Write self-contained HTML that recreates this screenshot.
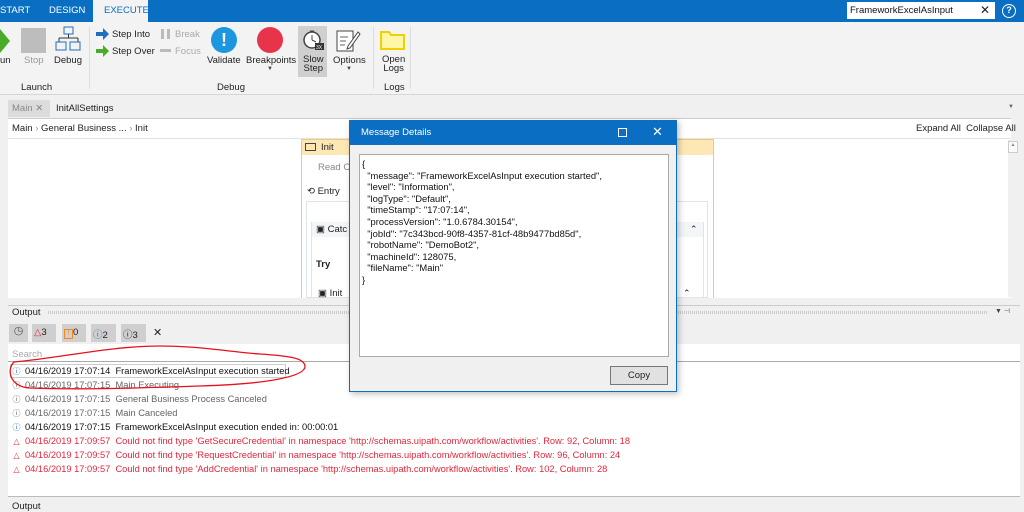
<!DOCTYPE html>
<html><head><meta charset="utf-8"><style>
*{margin:0;padding:0;box-sizing:border-box}
body{width:1024px;height:507px;overflow:hidden;background:#f0f0f0;font-family:"Liberation Sans",sans-serif;font-size:10px;color:#222;position:relative}
.a{position:absolute;white-space:nowrap}
.lbl{font-size:9.5px;color:#222;text-align:center}
.row{position:absolute;left:12px;font-size:9.3px;white-space:nowrap;height:14px;line-height:14px}
.ic{display:inline-block;width:9px;text-align:center;font-size:8px;margin-right:4px}
.g{color:#666}.r{color:#e0283c}.k{color:#111}
pre.a{font-family:"Liberation Sans",sans-serif;font-size:9.4px;line-height:11.6px;color:#111;white-space:pre}
</style></head><body>
<div class="a" style="left:0;top:0;width:1024px;height:22px;background:#0a6fc2"></div>
<div class="a" style="left:0;top:5px;color:#fff;font-size:9.5px">START</div>
<div class="a" style="left:49px;top:5px;color:#fff;font-size:9.5px">DESIGN</div>
<div class="a" style="left:93px;top:0;width:55px;height:23px;background:#f3f3f3"></div>
<div class="a" style="left:104px;top:5px;color:#0a6fc2;font-size:9.5px">EXECUTE</div>
<div class="a" style="left:847px;top:2px;width:148px;height:17px;background:#fff"></div>
<div class="a" style="left:850px;top:5px;font-size:9.5px;color:#111">FrameworkExcelAsInput</div>
<div class="a" style="left:980px;top:3px;font-size:12px;color:#222">✕</div>
<div class="a" style="left:1002px;top:4px;width:14px;height:14px;border:1.5px solid #fff;border-radius:50%;color:#fff;font-size:9px;text-align:center;line-height:11px;font-weight:bold">?</div>
<div class="a" style="left:0;top:22px;width:1024px;height:73px;background:#f3f3f3;border-bottom:1px solid #d6d6d6"></div>
<div class="a" style="left:0;top:29px;width:0;height:0;border-left:10px solid #4aaa2a;border-top:12px solid transparent;border-bottom:12px solid transparent"></div>
<div class="a lbl" style="left:0;top:55px">un</div>
<div class="a" style="left:21px;top:28px;width:25px;height:25px;background:#bdbdbd"></div>
<div class="a lbl" style="left:24px;top:55px;color:#999">Stop</div>
<svg class="a" style="left:55px;top:26px" width="28" height="28"><rect x="9" y="1" width="9" height="7" fill="none" stroke="#1e6fc0"/><path d="M13.5 8v4M4 12h19M4 12v4M23 12v4" stroke="#333" fill="none"/><rect x="1" y="16" width="10" height="8" fill="none" stroke="#1e6fc0"/><rect x="15" y="16" width="10" height="8" fill="none" stroke="#1e6fc0"/></svg>
<div class="a lbl" style="left:54px;top:55px">Debug</div>
<div class="a lbl" style="left:21px;top:82px">Launch</div>
<div class="a" style="left:89px;top:27px;width:1px;height:62px;background:#ddd"></div>
<svg class="a" style="left:96px;top:28px" width="14" height="12"><path d="M0 4h7V0l6 6-6 6V8H0z" fill="#1e6fc0"/></svg>
<div class="a" style="left:112px;top:29px;font-size:9.5px">Step Into</div>
<svg class="a" style="left:96px;top:45px" width="14" height="12"><path d="M0 4h7V0l6 6-6 6V8H0z" fill="#4aaa2a"/></svg>
<div class="a" style="left:112px;top:46px;font-size:9.5px">Step Over</div>
<div class="a" style="left:161px;top:29px;width:3px;height:10px;background:#bbb"></div><div class="a" style="left:167px;top:29px;width:3px;height:10px;background:#bbb"></div>
<div class="a" style="left:175px;top:29px;font-size:9.5px;color:#aaa">Break</div>
<div class="a" style="left:160px;top:49px;width:11px;height:3px;background:#bbb"></div>
<div class="a" style="left:175px;top:46px;font-size:9.5px;color:#aaa">Focus</div>
<div class="a" style="left:211px;top:27px;width:26px;height:26px;border-radius:50%;background:#1c96e0;color:#fff;font-weight:bold;font-size:18px;text-align:center;line-height:26px">!</div>
<div class="a lbl" style="left:207px;top:55px">Validate</div>
<div class="a" style="left:257px;top:27px;width:26px;height:26px;border-radius:50%;background:#e8344a"></div>
<div class="a lbl" style="left:246px;top:55px">Breakpoints</div>
<div class="a" style="left:267px;top:66px;font-size:6px;color:#444">▼</div>
<div class="a" style="left:298px;top:26px;width:29px;height:51px;background:#cfcfcf"></div>
<svg class="a" style="left:301px;top:28px" width="24" height="24"><circle cx="11" cy="12" r="8" fill="#fff" stroke="#444" stroke-width="1.5"/><path d="M9 3h4M11 12V7M11 12l4 2" stroke="#444" fill="none"/><rect x="14" y="15" width="9" height="7" fill="#333"/><text x="15" y="21" font-size="5" fill="#fff" font-family="Liberation Sans">3X</text></svg>
<div class="a lbl" style="left:303px;top:55px;line-height:9px">Slow<br>Step</div>
<svg class="a" style="left:335px;top:28px" width="28" height="24"><rect x="2" y="3" width="16" height="20" fill="#fff" stroke="#444"/><path d="M5 9h8M5 13h6M5 17h5" stroke="#666"/><path d="M13 18l10-14 2 2-10 14-3 1z" fill="#fff" stroke="#444"/></svg>
<div class="a lbl" style="left:333px;top:55px">Options</div>
<div class="a" style="left:346px;top:66px;font-size:6px;color:#444">▼</div>
<div class="a lbl" style="left:217px;top:82px">Debug</div>
<div class="a" style="left:373px;top:27px;width:1px;height:62px;background:#ddd"></div>
<svg class="a" style="left:380px;top:30px" width="26" height="20"><path d="M1 2h8l2 3h13v14H1z" fill="#fff6a8" stroke="#f0d000" stroke-width="2"/></svg>
<div class="a lbl" style="left:382px;top:55px;line-height:9px">Open<br>Logs</div>
<div class="a lbl" style="left:384px;top:82px">Logs</div>
<div class="a" style="left:410px;top:27px;width:1px;height:62px;background:#ddd"></div>
<div class="a" style="left:8px;top:100px;width:42px;height:17px;background:#dcdcdc"></div>
<div class="a" style="left:12px;top:103px;font-size:9.5px;color:#888">Main ✕</div>
<div class="a" style="left:56px;top:103px;font-size:9.5px">InitAllSettings</div>
<div class="a" style="left:1008px;top:104px;font-size:6px;color:#666">▼</div>
<div class="a" style="left:8px;top:118px;width:1003px;height:180px;background:#fff;border-top:1px solid #ccc"></div>
<div class="a" style="left:8px;top:138px;width:1003px;height:1px;background:#dde4ee"></div>
<div class="a" style="left:12px;top:123px;font-size:9.5px">Main <span style="color:#999">›</span> General Business ... <span style="color:#999">›</span> Init</div>
<div class="a" style="left:916px;top:123px;font-size:9.5px">Expand All &nbsp;Collapse All</div>
<div class="a" style="left:1008px;top:140px;width:10px;height:157px;background:#f0f0f0"></div>
<div class="a" style="left:1008px;top:141px;width:10px;height:12px;border:1px solid #ccc;background:#fafafa;font-size:5px;text-align:center;color:#888">▲</div>
<div class="a" style="left:301px;top:139px;width:413px;height:159px;border:1px solid #f3c878;border-bottom:none;background:#fff"></div>
<div class="a" style="left:302px;top:140px;width:411px;height:15px;background:#fde8b4"></div>
<div class="a" style="left:305px;top:143px;width:11px;height:8px;border:1px solid #444"></div>
<div class="a" style="left:321px;top:142px;font-size:9.5px">Init</div>
<div class="a" style="left:318px;top:162px;font-size:9.5px;color:#888">Read Co</div>
<div class="a" style="left:307px;top:186px;font-size:9.5px">⟲ Entry</div>
<div class="a" style="left:306px;top:201px;width:402px;height:97px;border:1px solid #dde4ee"></div>
<div class="a" style="left:311px;top:222px;width:393px;height:76px;border:1px solid #dde4ee"></div>
<div class="a" style="left:312px;top:222px;width:391px;height:15px;background:#f3f5f8"></div>
<div class="a" style="left:316px;top:224px;font-size:9.5px">▣ Catc</div>
<div class="a" style="left:690px;top:224px;font-size:9px">⌃</div>
<div class="a" style="left:316px;top:259px;font-size:9.5px;font-weight:bold">Try</div>
<div class="a" style="left:318px;top:288px;font-size:9.5px">▣ Init</div>
<div class="a" style="left:683px;top:288px;font-size:9px">⌃</div>
<div class="a" style="left:8px;top:305px;width:1012px;height:1px;background:#ccc"></div>
<div class="a" style="left:12px;top:307px;font-size:9.5px">Output</div>
<div class="a" style="left:48px;top:311px;width:940px;height:3px;background:repeating-linear-gradient(90deg,#ccc 0 1px,transparent 1px 2px)"></div>
<div class="a" style="left:995px;top:307px;font-size:7px;color:#444">▼ ⊣</div>
<div class="a" style="left:9px;top:324px;width:19px;height:18px;background:#cfcfcf;font-size:11px;text-align:center;color:#555">◷</div>
<div class="a" style="left:32px;top:324px;width:24px;height:18px;background:#cfcfcf;font-size:9.5px;padding:3px 2px"><span style="color:#e0283c">△</span>3</div>
<div class="a" style="left:62px;top:324px;width:24px;height:18px;background:#cfcfcf;font-size:9.5px;padding:3px 2px"><span style="display:inline-block;width:9px;height:10px;border:1px solid #f08a20;color:#f08a20;font-size:7px;text-align:center;line-height:8px">!</span>0</div>
<div class="a" style="left:91px;top:324px;width:25px;height:18px;background:#cfcfcf;font-size:9.5px;padding:3px 2px"><span style="color:#1e6fc0">ⓘ</span>2</div>
<div class="a" style="left:121px;top:324px;width:25px;height:18px;background:#cfcfcf;font-size:9.5px;padding:3px 2px">ⓘ3</div>
<div class="a" style="left:153px;top:326px;font-size:11px">✕</div>
<div class="a" style="left:8px;top:344px;width:1012px;height:18px;background:#fff;border-bottom:1px solid #aaa"></div>
<div class="a" style="left:12px;top:349px;font-size:9.5px;color:#aaa">Search</div>
<div class="a" style="left:8px;top:362px;width:1012px;height:135px;background:#fff;border-bottom:1px solid #bbb"></div>
<div class="a" style="left:10px;top:364px;width:276px;height:14px;border:1px solid #ccc"></div>
<div class="row k" style="top:364px"><span class="ic" style="color:#1e6fc0">ⓘ</span>04/16/2019 17:07:14&nbsp; FrameworkExcelAsInput execution started</div>
<div class="row g" style="top:378px"><span class="ic">ⓘ</span>04/16/2019 17:07:15&nbsp; Main Executing</div>
<div class="row g" style="top:392px"><span class="ic">ⓘ</span>04/16/2019 17:07:15&nbsp; General Business Process Canceled</div>
<div class="row g" style="top:406px"><span class="ic">ⓘ</span>04/16/2019 17:07:15&nbsp; Main Canceled</div>
<div class="row k" style="top:420px"><span class="ic" style="color:#1e6fc0">ⓘ</span>04/16/2019 17:07:15&nbsp; FrameworkExcelAsInput execution ended in: 00:00:01</div>
<div class="row r" style="top:434px"><span class="ic">△</span>04/16/2019 17:09:57&nbsp; Could not find type 'GetSecureCredential' in namespace 'http://schemas.uipath.com/workflow/activities'. Row: 92, Column: 18</div>
<div class="row r" style="top:448px"><span class="ic">△</span>04/16/2019 17:09:57&nbsp; Could not find type 'RequestCredential' in namespace 'http://schemas.uipath.com/workflow/activities'. Row: 96, Column: 24</div>
<div class="row r" style="top:462px"><span class="ic">△</span>04/16/2019 17:09:57&nbsp; Could not find type 'AddCredential' in namespace 'http://schemas.uipath.com/workflow/activities'. Row: 102, Column: 28</div>
<div class="a" style="left:12px;top:501px;font-size:9.5px">Output</div>
<svg class="a" style="left:0;top:340px" width="320" height="60"><path d="M14 22 C60 18 110 6 160 6 C200 6 230 12 260 14 C290 16 304 18 305 26 C306 36 270 44 200 46 C140 48 80 50 30 48 C10 47 6 30 14 22 Z" fill="none" stroke="#e8101a" stroke-width="1.3"/></svg>
<div class="a" style="left:349px;top:120px;width:328px;height:272px;background:#f0f0f0;border:1px solid #0a6fc2;box-shadow:2px 2px 6px rgba(0,0,0,.25)"></div>
<div class="a" style="left:349px;top:120px;width:328px;height:25px;background:#0a6fc2"></div>
<div class="a" style="left:361px;top:127px;color:#fff;font-size:9.5px">Message Details</div>
<div class="a" style="left:618px;top:128px;width:9px;height:9px;border:1px solid #fff"></div>
<div class="a" style="left:652px;top:124px;color:#fff;font-size:13px">✕</div>
<div class="a" style="left:359px;top:154px;width:310px;height:203px;background:#fff;border:1px solid #aaa"></div>
<pre class="a" style="left:362px;top:158px">{
  "message": "FrameworkExcelAsInput execution started",
  "level": "Information",
  "logType": "Default",
  "timeStamp": "17:07:14",
  "processVersion": "1.0.6784.30154",
  "jobId": "7c343bcd-90f8-4357-81cf-48b9477bd85d",
  "robotName": "DemoBot2",
  "machineId": 128075,
  "fileName": "Main"
}</pre>
<div class="a" style="left:610px;top:366px;width:58px;height:19px;background:#e1e1e1;border:1px solid #777;font-size:9.5px;text-align:center;line-height:17px">Copy</div>
</body></html>
